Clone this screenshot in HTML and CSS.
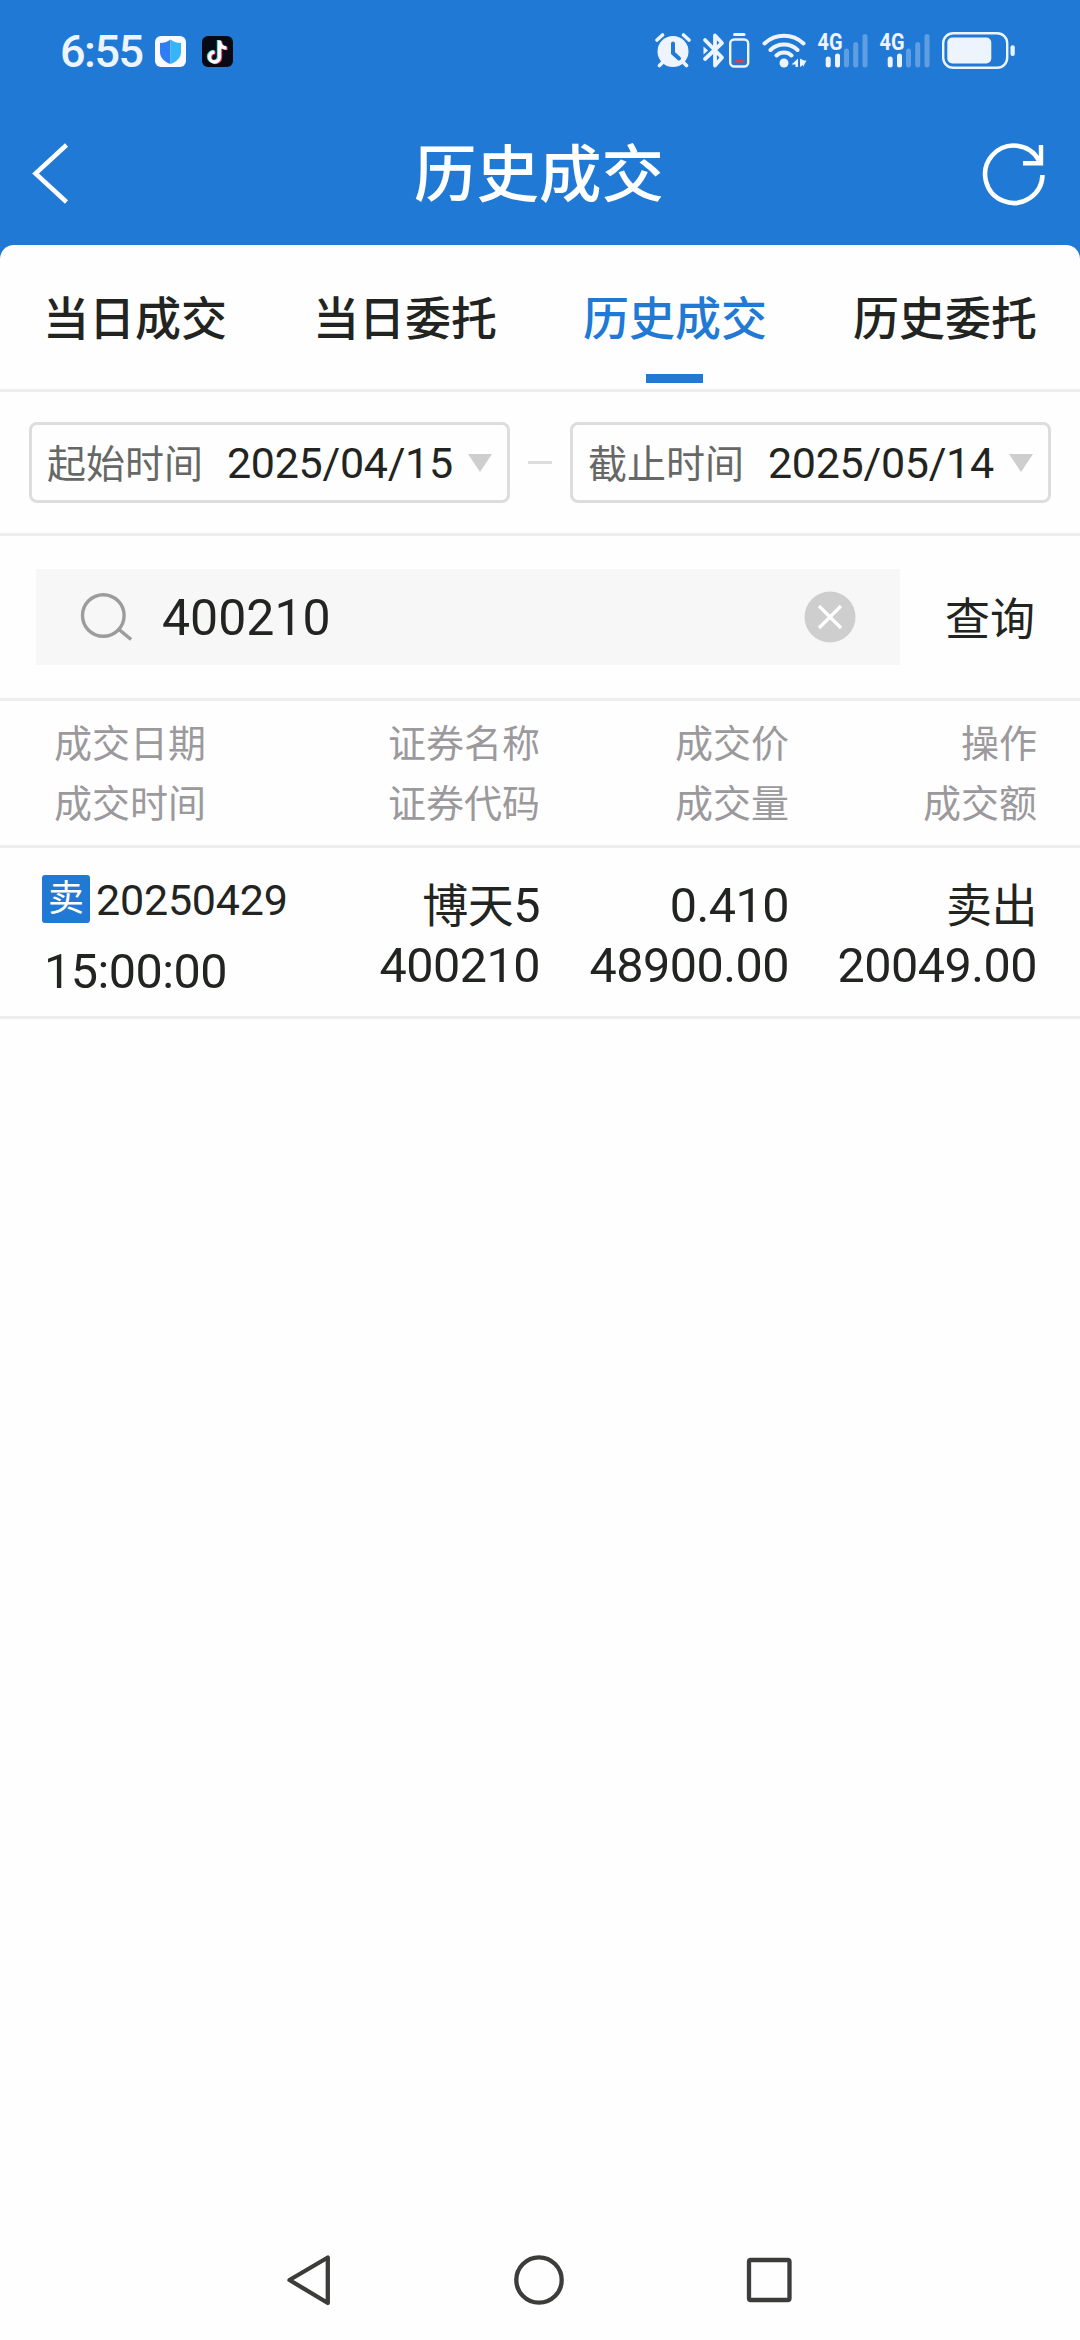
FILE: index.html
```html
<!DOCTYPE html>
<html lang="zh-CN">
<head>
    <meta charset="UTF-8">
    <title>历史成交</title>
    <link rel="stylesheet" href="styles.css">
</head>
<body>
    <div class="top">
        <div class="status">
            <span class="time">6:55</span>
            <svg class="app" width="31" height="31" viewBox="0 0 31 31">
                <rect width="31" height="31" rx="6" fill="#f8fafd"/>
                <path d="M15.500 3.500C12.500 6 9 7 5 7v9c0 6 5 10 10.500 12z" fill="#2f7df6"/>
                <path d="M15.500 3.500C18.500 6 22 7 26 7v9c0 6-5 10-10.500 12z" fill="#35b4f8"/>
            </svg>
            <svg class="app2" width="31" height="31" viewBox="0 0 31 31">
                <rect width="31" height="31" rx="6" fill="#070914"/>
                <g fill="none" stroke-width="3.400">
                    <path d="M16.500 4v17a5 5 0 1 1-5-5.500M16.500 5c.5 4 3 6.500 7 6.500" stroke="#2fe0dc"/>
                    <path d="M18.500 5v17a5 5 0 1 1-5-5.500M18.500 6c.5 4 3 6.500 7 6.500" stroke="#f3385c"/>
                    <path d="M17.500 4.500v17a5 5 0 1 1-5-5.500M17.500 5.500c.5 4 3 6.500 7 6.500" stroke="#fff"/>
                </g>
            </svg>
            <!-- 右侧系统图标 -->
            <svg class="sys" width="361" height="60" viewBox="655 21 361 60">
                <!-- 闹钟 -->
                <g fill="none" stroke="#edf4fd" stroke-linecap="round">
                    <circle cx="673" cy="51.500" r="15.500" fill="#edf4fd" stroke="none"/>
                    <path d="M657 40l5.500-5M689 40l-5.500-5M663 62l-3.500 3.500M683 62l3.500 3.500" stroke-width="3.600"/>
                    <path d="M673 43.500v9.500l6 5.500" stroke="#2179d6" stroke-width="4"/>
                </g>
                <!-- 蓝牙 -->
                <path d="M705 40l17 17.500-7 8V35.500l7 7.500-17 16" fill="none" stroke="#edf4fd" stroke-width="3.800" stroke-linejoin="round" stroke-linecap="round"/>
                <path d="M703.500 46.500l4.500 4-4.500 4z" fill="#edf4fd"/>
                <rect x="730.200" y="39.500" width="18" height="27" rx="4" fill="none" stroke="#edf4fd" stroke-width="2.400"/>
                <path d="M734.500 34.500h9.500" stroke="#edf4fd" stroke-width="3" stroke-linecap="round"/>
                <path d="M735 61.300h9" stroke="#e2403f" stroke-width="2.400"/>
                <!-- wifi -->
                <g fill="none" stroke="#edf4fd" stroke-width="4" stroke-linecap="round">
                    <path d="M764.500 43.500a28.500 28.500 0 0 1 39 0M770.500 50a19.500 19.500 0 0 1 27 0M776.500 55.500a11 11 0 0 1 15 0"/>
                    <circle cx="784" cy="63" r="4.500" fill="#edf4fd" stroke="none"/>
                </g>
                <path d="M791.500 64.500l6.500-6v8.500h-2.500v-2.500zM806.500 60.500h-2.500l-4-2v8.500l3-2v2z" fill="#edf4fd"/>
                <!-- 信号 -->
                <g id="sig">
                    <text x="817.500" y="50" class="net" textLength="25" lengthAdjust="spacingAndGlyphs">4G</text>
                    <g stroke="#edf4fd" stroke-width="5" stroke-linecap="round">
                        <path d="M828.200 59v6M837.500 56v9"/>
                        <path d="M846.500 51v14M855.700 44.500v20.500M865 36.500v28.500" opacity=".3"/>
                    </g>
                </g>
                <use href="#sig" x="62"/>
                <!-- 电池 -->
                <rect x="943.200" y="33.200" width="64" height="34.600" rx="10" fill="none" stroke="#edf4fd" stroke-width="2.400"/>
                <rect x="947.300" y="37.500" width="44" height="26" rx="5" fill="#edf4fd"/>
                <rect x="1010.500" y="45.300" width="4.300" height="10.700" rx="2" fill="#edf4fd"/>
            </svg>
        </div>
        <div class="header">
            <svg width="38" height="64" viewBox="32 142 38 64">
                <path d="M66.500 145L35.500 173.500l31 28.500" fill="none" stroke="#fff" stroke-width="4.500"/>
            </svg>
            <h1>历史成交</h1>
            <svg width="64" height="64" viewBox="982 142 64 64">
                <path d="M1042.500 175a28.700 28.700 0 1 1-3.500-14.500" fill="none" stroke="#fff" stroke-width="4.600"/>
                <path d="M1041 145v18.200h-18" fill="none" stroke="#fff" stroke-width="4.400"/>
            </svg>
        </div>
    </div>

    <div class="main">
        <ul class="tabs">
            <li>当日成交</li>
            <li>当日委托</li>
            <li class="on">历史成交</li>
            <li>历史委托</li>
        </ul>

        <div class="dates">
            <div class="date">
                <span class="lab">起始时间</span>
                <span class="val">2025/04/15</span>
                <i></i>
            </div>
            <b></b>
            <div class="date">
                <span class="lab">截止时间</span>
                <span class="val">2025/05/14</span>
                <i></i>
            </div>
        </div>

        <div class="search">
            <div class="box">
                <svg width="52" height="52" viewBox="80 591 52 52">
                    <g fill="none" stroke="#9c9c9c" stroke-width="3.400">
                        <circle cx="103.300" cy="615.500" r="20.800"/>
                        <path d="M119 629.500l12 10"/>
                    </g>
                </svg>
                <span class="code">400210</span>
                <svg width="52" height="52" viewBox="0 0 52 52">
                    <circle cx="26" cy="26" r="25.500" fill="#cecece"/>
                    <path d="M15 15l22 22M37 15L15 37" stroke="#fff" stroke-width="3.200"/>
                </svg>
            </div>
            <span class="btn">查询</span>
        </div>

        <div class="row head">
            <div class="c1">成交日期<br>成交时间</div>
            <div class="c2">证券名称<br>证券代码</div>
            <div class="c3">成交价<br>成交量</div>
            <div class="c4">操作<br>成交额</div>
        </div>

        <div class="row item">
            <div class="c1">
                <p class="day"><em>卖</em><span>20250429</span></p>
                <p class="clock">15:00:00</p>
            </div>
            <div class="c2"><span class="cn">博天</span>5<br>400210</div>
            <div class="c3">0.410<br>48900.00</div>
            <div class="c4"><span class="cn">卖出</span><br>20049.00</div>
        </div>
    </div>

    <div class="nav">
        <svg width="50" height="54" viewBox="284 2253 50 54">
            <path d="M327.800 2257.500v45.500L289.500 2280z" fill="none" stroke="#3c3d3b" stroke-width="4.300" stroke-linejoin="round"/>
        </svg>
        <svg width="54" height="54" viewBox="513 2253 54 54">
            <circle cx="540" cy="2280" r="22.700" fill="none" stroke="#3c3d3b" stroke-width="4.300"/>
        </svg>
        <svg width="50" height="54" viewBox="744 2253 50 54">
            <rect x="749" y="2260" width="40.500" height="40" rx="1.800" fill="none" stroke="#3c3d3b" stroke-width="4.300"/>
        </svg>
    </div>
</body>
</html>
```
FILE: styles.css
```css
body,p,ul,h1 { margin: 0; padding: 0;}
li { list-style: none;}
em,i,b { font-style: normal; font-weight: normal;}
svg { display: block; flex: none;}
body {
    display: flex;
    flex-direction: column;
    width: 1080px;
    height: 2340px;
    overflow: hidden;
    background-color: #fefefe;
    color: #222421;
    font-family: Roboto, "Noto Sans CJK SC", sans-serif;
}
.top {
    height: 259px;
    background-color: #2179d6;
}
.status {
    display: flex;
    align-items: center;
    height: 102px;
    padding: 0 64px 0 60px;
    box-sizing: border-box;
}
.time {
    width: 95px;
    padding-top: 2px;
    font-size: 45px;
    font-weight: 500;
    letter-spacing: -1.500px;
    line-height: 50px;
    color: #edf4fd;
}
.app2 {
    margin-left: 16px;
}
.sys {
    margin-left: auto;
}
.net {
    font-size: 23px;
    font-weight: 700;
    fill: #edf4fd;
}
.header {
    display: flex;
    align-items: center;
    justify-content: space-between;
    height: 143px;
    padding: 0 34px 0 32px;
}
.header h1 {
    padding-top: 5px;
    margin-left: 26px;
    font-size: 62.500px;
    font-weight: 500;
    line-height: 90px;
    color: #fff;
}
.main {
    flex: 1;
    margin-top: -14px;
    border-radius: 14px 14px 0 0;
    background-color: #fefefe;
}
.tabs {
    display: grid;
    grid-template-columns: repeat(4, 1fr);
    height: 144px;
    border-bottom: 3px solid #eee;
}
.tabs li {
    position: relative;
    height: 144px;
    text-align: center;
    font-size: 46px;
    font-weight: 500;
    line-height: 149px;
}
.tabs .on {
    color: #2179d6;
}
.tabs .on:after {
    content: '';
    position: absolute;
    left: 106px;
    bottom: 6px;
    width: 57px;
    height: 9px;
    background-color: #2179d6;
}
.dates {
    display: flex;
    align-items: center;
    justify-content: space-between;
    height: 141px;
    padding: 0 29px;
    border-bottom: 3px solid #eee;
}
.dates b {
    width: 24px;
    height: 3px;
    background-color: #ddd;
}
.date {
    display: flex;
    align-items: center;
    width: 481px;
    height: 81px;
    padding: 0 15px;
    box-sizing: border-box;
    border: 3px solid #ddd;
    border-radius: 8px;
}
.date i {
    margin-left: auto;
    border: 12px solid transparent;
    border-top: 18px solid #cecece;
    border-bottom: 0;
}
.lab {
    width: 180px;
    padding-bottom: 4px;
    font-size: 39px;
    color: #666865;
}
.val {
    padding-top: 1px;
    font-size: 43px;
    letter-spacing: -.3px;
}
.search {
    display: flex;
    align-items: center;
    justify-content: space-between;
    height: 162px;
    padding: 0 45px 0 36px;
    border-bottom: 3px solid #eee;
}
.box {
    display: flex;
    align-items: center;
    width: 864px;
    height: 96px;
    padding: 0 44px;
    box-sizing: border-box;
    background-color: #f7f7f7;
}
.code {
    flex: 1;
    padding-top: 2px;
    margin-left: 30px;
    font-size: 50px;
}
.btn {
    padding-bottom: 2px;
    font-size: 45px;
}
.row {
    display: grid;
    grid-template-columns: 240px 258px 249px 248px;
    padding: 0 43px 0 42px;
    border-bottom: 3px solid #eee;
    line-height: 60px;
    text-align: right;
}
.row .c1 {
    text-align: left;
}
.head {
    height: 131px;
    padding-top: 13px;
    font-size: 38px;
    color: #9b999c;
}
.head .c1 {
    padding-left: 12px;
}
.item {
    height: 140px;
    padding-top: 28px;
    font-size: 48.500px;
    letter-spacing: -.5px;
}
.item .cn {
    font-size: 46px;
}
.day {
    display: flex;
    align-items: center;
    height: 48px;
    font-size: 43px;
    letter-spacing: -.2px;
}
.day em {
    flex: none;
    width: 48px;
    height: 48px;
    margin-right: 6px;
    border-radius: 3px;
    background-color: #2179d6;
    color: #fff;
    font-size: 36px;
    line-height: 49px;
    text-align: center;
}
.day span {
    padding-top: 2px;
}
.item .c1 {
    margin-top: -1px;
}
.clock {
    padding-left: 2px;
    margin-top: 19px;
}
.nav {
    display: flex;
    align-items: center;
    justify-content: space-between;
    height: 120px;
    padding: 0 286px 0 284px;
}
```
